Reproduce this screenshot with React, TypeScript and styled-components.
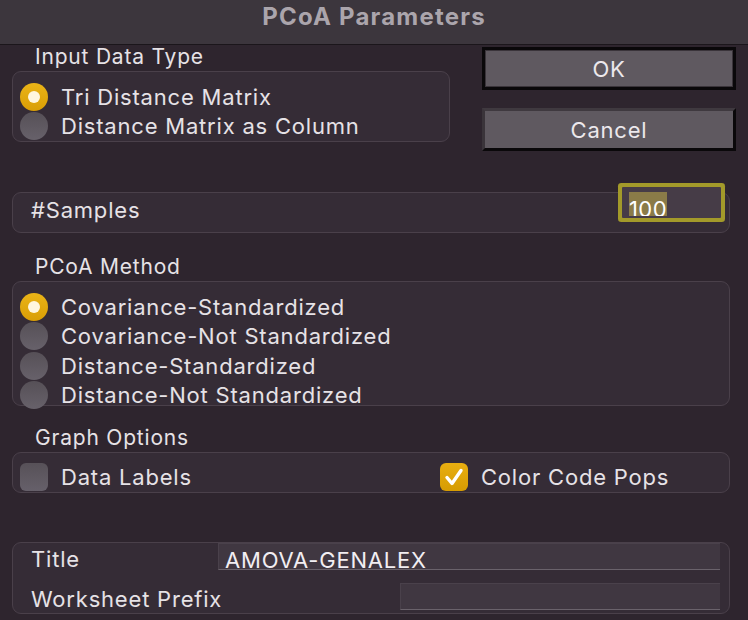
import React from "react";
import styled, { createGlobalStyle } from "styled-components";

const GlobalStyle = createGlobalStyle`
  html, body {
    margin: 0;
    padding: 0;
    background: #2e252e;
  }
  * {
    box-sizing: border-box;
  }
`;

const Dialog = styled.div`
  width: 748px;
  height: 620px;
  overflow: hidden;
  display: flex;
  flex-direction: column;
  background: #2e252e;
  color: #e6e2e6;
  font-family: Inter, "Liberation Sans", sans-serif;
  font-size: 22px;
  letter-spacing: 0.8px;
`;

const TitleBar = styled.div`
  height: 45px;
  flex-shrink: 0;
  display: flex;
  justify-content: center;
  align-items: center;
  background: #3c363d;
  border-bottom: 1px solid #1b161b;
  color: #aba5ac;
  font-weight: 700;
  font-size: 24px;
  letter-spacing: 1.2px;
  padding-bottom: 12px;
`;

const Content = styled.div`
  display: flex;
  flex-direction: column;
  padding: 0 18px 0 12px;
`;

const TopRow = styled.div`
  display: flex;
  justify-content: space-between;
  align-items: flex-start;
`;

const LeftCol = styled.div`
  width: 438px;
  display: flex;
  flex-direction: column;
`;

const ButtonCol = styled.div`
  width: 254px;
  margin-top: 2px;
  margin-right: -6px;
  display: flex;
  flex-direction: column;
  gap: 18px;
`;

const DialogButton = styled.button<{ $default?: boolean }>`
  height: 43px;
  width: 100%;
  background: #5f5960;
  color: #ece8ec;
  font-family: inherit;
  font-size: 22px;
  letter-spacing: 0.8px;
  padding: 0;
  border: 3px solid #0a080a;
  border-color: ${(p) =>
    p.$default ? "#0a080a" : "#3f393f #0a080a #0a080a #3a343a"};
  box-shadow: ${(p) => (p.$default ? "inset 0 0 0 1px #3a343a" : "none")};
`;

const SectionLabel = styled.div<{ $top?: number }>`
  height: 26px;
  line-height: 24px;
  padding-left: 23px;
  margin-top: ${(p) => p.$top ?? 0}px;
  font-size: 21px;
`;

const Group = styled.div<{ $height: number; $top?: number }>`
  height: ${(p) => p.$height}px;
  margin-top: ${(p) => p.$top ?? 0}px;
  border: 1px solid #4a404a;
  border-radius: 9px;
  background: #352c36;
`;

const RadioList = styled.div`
  display: flex;
  flex-direction: column;
  padding: 10px 0 0 7px;
`;

const OptionRow = styled.div`
  height: 29.5px;
  display: flex;
  align-items: center;
  gap: 13px;
  white-space: nowrap;
`;

const Radio = styled.span<{ $on?: boolean }>`
  width: 28px;
  height: 28px;
  flex-shrink: 0;
  border-radius: 50%;
  display: flex;
  align-items: center;
  justify-content: center;
  background: ${(p) =>
    p.$on
      ? "linear-gradient(#eab417, #d99e05)"
      : "linear-gradient(#565057, #67616a)"};
  &::after {
    content: "";
    display: ${(p) => (p.$on ? "block" : "none")};
    width: 12px;
    height: 12px;
    border-radius: 50%;
    background: #fff6de;
  }
`;

const SamplesGroup = styled(Group)`
  display: flex;
  align-items: flex-start;
  justify-content: space-between;
  padding: 0 4px 0 18px;
`;

const SamplesLabel = styled.span`
  line-height: 35px;
`;

const FocusField = styled.div`
  margin-top: -6px;
  width: 99px;
  height: 31px;
  background: #463c47;
  box-shadow: 0 0 0 4px #a39a2a;
  border-radius: 1px;
  margin-right: 4px;
  overflow: hidden;
  padding-left: 7px;
  padding-top: 5px;
`;

const Selected = styled.span`
  display: inline-block;
  height: 24px;
  line-height: 34px;
  background: #8a7b48;
  color: #ffffff;
  font-size: 22px;
  letter-spacing: 0.4px;
  overflow: hidden;
`;

const CheckRow = styled.div`
  display: flex;
  padding: 10px 0 0 7px;
`;

const CheckItem = styled.div<{ $width?: number }>`
  display: flex;
  align-items: center;
  gap: 13px;
  height: 28px;
  width: ${(p) => (p.$width ? `${p.$width}px` : "auto")};
`;

const Box = styled.span<{ $on?: boolean }>`
  width: 28px;
  height: 28px;
  flex-shrink: 0;
  border-radius: 6px;
  display: flex;
  align-items: center;
  justify-content: center;
  background: ${(p) =>
    p.$on
      ? "linear-gradient(#e8ae10, #d69c02)"
      : "linear-gradient(#575158, #66606a)"};
`;

const FieldGroup = styled(Group)`
  display: flex;
  flex-direction: column;
  gap: 13px;
  padding: 0 9px 0 18px;
`;

const FieldRow = styled.div`
  display: flex;
  justify-content: space-between;
  height: 27px;
`;

const FieldLabel = styled.span`
  line-height: 33px;
  white-space: nowrap;
`;

const TextField = styled.div<{ $width: number }>`
  width: ${(p) => p.$width}px;
  height: 27px;
  background: #403741;
  border-top: 1px solid #4a414b;
  border-left: 1px solid #4a414b;
  border-bottom: 1px solid #6a626b;
  color: #f2eef2;
  padding-left: 6px;
  line-height: 33px;
  overflow: hidden;
  white-space: nowrap;
`;

const radiosInput = ["Tri Distance Matrix", "Distance Matrix as Column"];
const radiosMethod = [
  "Covariance-Standardized",
  "Covariance-Not Standardized",
  "Distance-Standardized",
  "Distance-Not Standardized",
];

const CheckMark = () => (
  <svg width="22" height="22" viewBox="0 0 22 22">
    <polyline
      points="4,11.5 9,17.5 18,4.5"
      fill="none"
      stroke="#ffffff"
      strokeWidth="3.4"
      strokeLinecap="round"
      strokeLinejoin="round"
    />
  </svg>
);

export default () => {
  return (
    <>
      <GlobalStyle />
      <Dialog>
        <TitleBar>PCoA Parameters</TitleBar>
        <Content>
          <TopRow>
            <LeftCol>
              <SectionLabel>Input Data Type</SectionLabel>
              <Group $height={71}>
                <RadioList>
                  {radiosInput.map((r, i) => (
                    <OptionRow key={r}>
                      <Radio $on={i === 0} />
                      {r}
                    </OptionRow>
                  ))}
                </RadioList>
              </Group>
            </LeftCol>
            <ButtonCol>
              <DialogButton $default>OK</DialogButton>
              <DialogButton>Cancel</DialogButton>
            </ButtonCol>
          </TopRow>

          <SamplesGroup $height={41} $top={41}>
            <SamplesLabel>#Samples</SamplesLabel>
            <FocusField>
              <Selected>100</Selected>
            </FocusField>
          </SamplesGroup>

          <SectionLabel $top={22}>PCoA Method</SectionLabel>
          <Group $height={125}>
            <RadioList>
              {radiosMethod.map((r, i) => (
                <OptionRow key={r}>
                  <Radio $on={i === 0} />
                  {r}
                </OptionRow>
              ))}
            </RadioList>
          </Group>

          <SectionLabel $top={20}>Graph Options</SectionLabel>
          <Group $height={41}>
            <CheckRow>
              <CheckItem $width={420}>
                <Box />
                Data Labels
              </CheckItem>
              <CheckItem>
                <Box $on>
                  <CheckMark />
                </Box>
                Color Code Pops
              </CheckItem>
            </CheckRow>
          </Group>

          <FieldGroup $height={72} $top={49}>
            <FieldRow>
              <FieldLabel>Title</FieldLabel>
              <TextField $width={502}>AMOVA-GENALEX</TextField>
            </FieldRow>
            <FieldRow>
              <FieldLabel>Worksheet Prefix</FieldLabel>
              <TextField $width={320} />
            </FieldRow>
          </FieldGroup>
        </Content>
      </Dialog>
    </>
  );
};
